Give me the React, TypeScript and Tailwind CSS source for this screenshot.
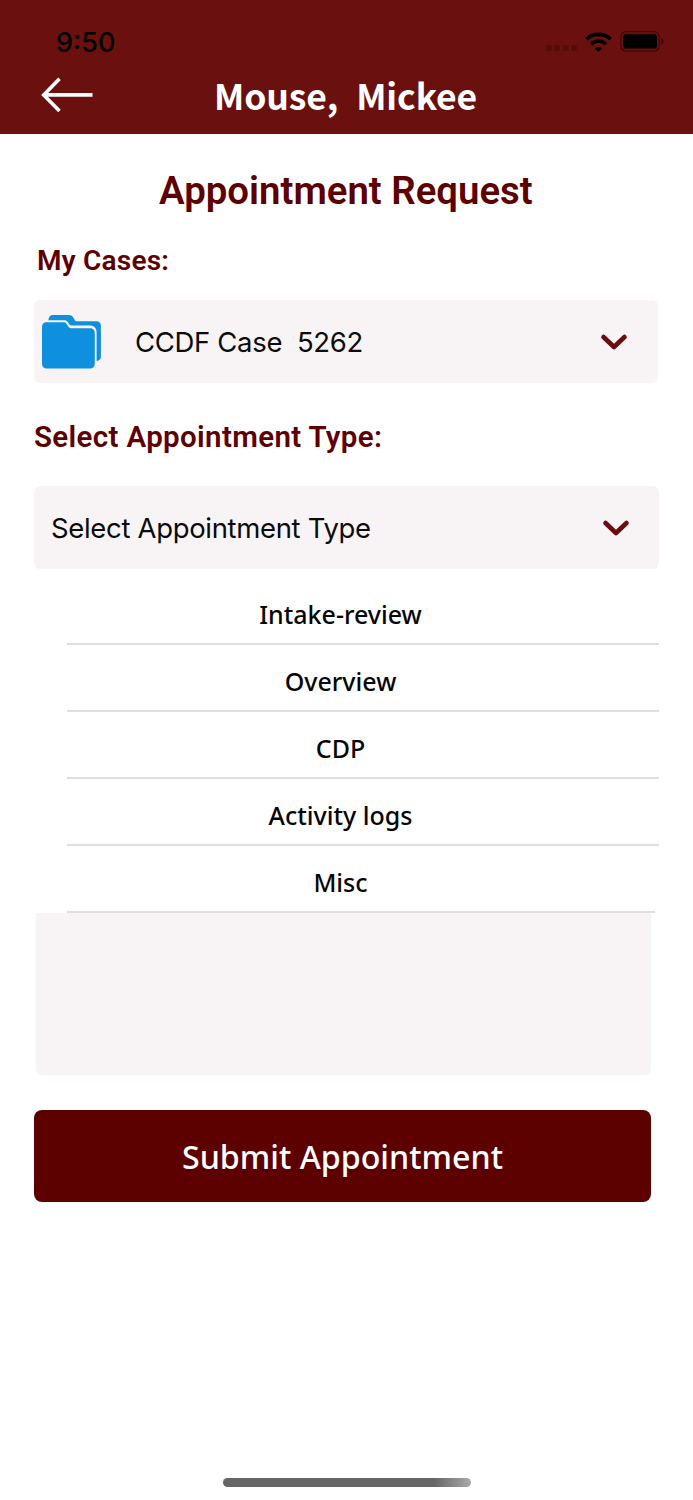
import React, { ReactNode } from "react";
import clsx from "clsx";

const appointmentTypes = ["Intake-review", "Overview", "CDP", "Activity logs", "Misc"];

function StatusBar() {
  return (
    <div className="flex h-[60px] items-start justify-between pt-[25px] pl-[56px] pr-[29px] text-black">
      <span className="pt-px font-['Inter'] text-[27px] leading-[34px] font-medium">9:50</span>
      <div className="flex items-center pt-[6px]">
        {/* No signal */}
        <div className="mt-[13px] flex gap-[2.4px] opacity-20">
          <span className="size-[6px] rounded-[2px] bg-black" />
          <span className="size-[6px] rounded-[2px] bg-black" />
          <span className="size-[6px] rounded-[2px] bg-black" />
          <span className="size-[6px] rounded-[2px] bg-black" />
        </div>
        <svg className="ml-2 h-5 w-[27px]" viewBox="0 0 27 20" fill="none" stroke="currentColor">
          <path d="M1.4 7.2A17.4 17.4 0 0 1 25.6 7.2" strokeWidth="3.7" />
          <path d="M5.9 12.2A10.8 10.8 0 0 1 21.1 12.2" strokeWidth="3.6" />
          <path d="M13.5 20L9.8 16.4A5.3 5.3 0 0 1 17.2 16.4Z" fill="currentColor" stroke="none" />
        </svg>
        <svg className="ml-2 h-[21px] w-[44px]" viewBox="0 0 44 21">
          <rect x=".7" y=".7" width="38.6" height="19.4" rx="5.5" fill="none" stroke="#000" strokeOpacity=".4" strokeWidth="1.3" />
          <rect x="3" y="3.2" width="34" height="14.4" rx="2.8" fill="#000" />
          <path d="M41.3 7v7c1.4-.6 2.2-2 2.2-3.5S42.700 7.600 41.300 7Z" fill="#000" fillOpacity=".45" />
        </svg>
      </div>
    </div>
  );
}

function Header({ title }: { title: string }) {
  return (
    <header className="h-[134px] bg-[#6a100e]">
      <StatusBar />
      <div className="grid grid-cols-[214px_1fr] items-start">
        <button className="pt-[17px] pl-[41px] text-left" aria-label="Back">
          <svg className="h-[36px] w-[52px]" viewBox="0 0 52 36" fill="none" stroke="#fff" strokeWidth="3.6">
            <path d="M18.500 1.700L2.700 17.900L18.500 34M2.700 17.900H51.500" />
          </svg>
        </button>
        <h1 className="pt-[10px] font-['Noto_Sans_CJK_JP',sans-serif] text-[35.500px] leading-[50px] font-bold tracking-[-0.1px] [word-spacing:1px] whitespace-pre text-white">
          {title}
        </h1>
      </div>
    </header>
  );
}

function FolderIcon() {
  return (
    <svg className="h-[54px] w-[59px]" viewBox="0 0 59 54" fill="#0e90df">
      <path d="M6.300 5.200C6.800 1.700 8.200 0 11 0H27c2.200 0 3.400 1 4.400 2.700l1.500 2.500c.5.800 1 1 2 1h19c3.500 0 5 1.500 5 4.800v30.500c0 2.500-1.200 4-4.300 4.500V17.500c0-4.700-2.500-7-7-7H29.500c-1.300 0-1.900-.4-2.500-1.400L26 7.300c-.9-1.500-2-2.100-3.800-2.100Z" />
      <path d="M5 7.200H21.500c1.500 0 2.200.4 3 1.600l1.800 2.800c.7 1.100 1.500 1.600 2.900 1.600H47.500c3.700 0 5.300 1.700 5.300 5.300V48.200c0 3.600-1.700 5.300-5.300 5.300H5.300C1.700 53.500 0 51.800 0 48.200V12.500C0 9 1.500 7.200 5 7.200Z" />
    </svg>
  );
}

interface SelectBoxProps {
  label: string;
  icon?: ReactNode;
  className?: string;
}

function SelectBox({ label, icon, className }: SelectBoxProps) {
  return (
    <div className={clsx("flex items-center rounded-md bg-[#f8f4f6]", className)}>
      {icon}
      <span className="flex-1 font-['Inter'] text-[27.500px] leading-[36px] tracking-[-0.33px] whitespace-pre text-[#0b0b0b]">{label}</span>
      <svg className="h-[18px] w-[28px]" viewBox="0 0 28 18" fill="none" stroke="#6a0d0e" strokeWidth="4.600" strokeLinecap="round" strokeLinejoin="round">
        <path d="M3.500 4L14 14L24.500 4" />
      </svg>
    </div>
  );
}

function FieldLabel({ children, className }: { children: ReactNode; className?: string }) {
  return (
    <p className={clsx("font-['Roboto'] leading-[36px] font-semibold whitespace-nowrap text-[#5d0000]", className)}>
      {children}
    </p>
  );
}

export default function App() {
  return (
    <div className="flex h-[1500px] w-[693px] flex-col overflow-hidden bg-white">
      <Header title="Mouse,  Mickee" />

      <main className="flex flex-col pl-[34px]">
        <h2 className="mt-[32px] pl-[125px] font-['Roboto'] text-[38.400px] leading-[50px] font-semibold whitespace-nowrap text-[#5d0000]">
          Appointment Request
        </h2>

        <FieldLabel className="mt-[27px] pl-[3px] text-[28px] tracking-[0.22px]">My Cases:</FieldLabel>
        <SelectBox
          className="mt-[21px] h-[83px] w-[624px] gap-[34px] pr-[30px] pl-2"
          icon={<FolderIcon />}
          label="CCDF Case  5262"
        />

        <FieldLabel className="mt-[36px] text-[29.500px] tracking-[0.35px]">Select Appointment Type:</FieldLabel>
        <SelectBox className="mt-[31px] h-[83px] w-[625px] pr-[29px] pl-[17px]" label="Select Appointment Type" />

        <ul className="mt-[9px] ml-[33px] w-[592px]">
          {appointmentTypes.map((type) => (
            <li
              key={type}
              className="h-[67px] border-b-2 border-[#dfdfdf] pt-[18px] pr-[45px] text-center font-['Noto_Sans'] text-[25px] leading-[36px] font-medium text-[#050505] last:w-[588px] last:pr-[41px]"
            >
              {type}
            </li>
          ))}
        </ul>

        <div className="ml-[1.500px] h-[162px] w-[615px] rounded-b-md bg-[#f8f4f6]" />

        <button className="mt-[35px] h-[92px] w-[617px] rounded-lg bg-[#5d0000] pt-[2px] font-['Noto_Sans'] text-[32.200px] font-medium text-white">
          Submit Appointment
        </button>
      </main>

      {/* Home indicator */}
      <div className="mx-auto mt-auto mb-[13px] h-[9px] w-[248px] rounded-full bg-linear-to-r from-[#666] from-85% to-[#aaa]" />
    </div>
  );
}
